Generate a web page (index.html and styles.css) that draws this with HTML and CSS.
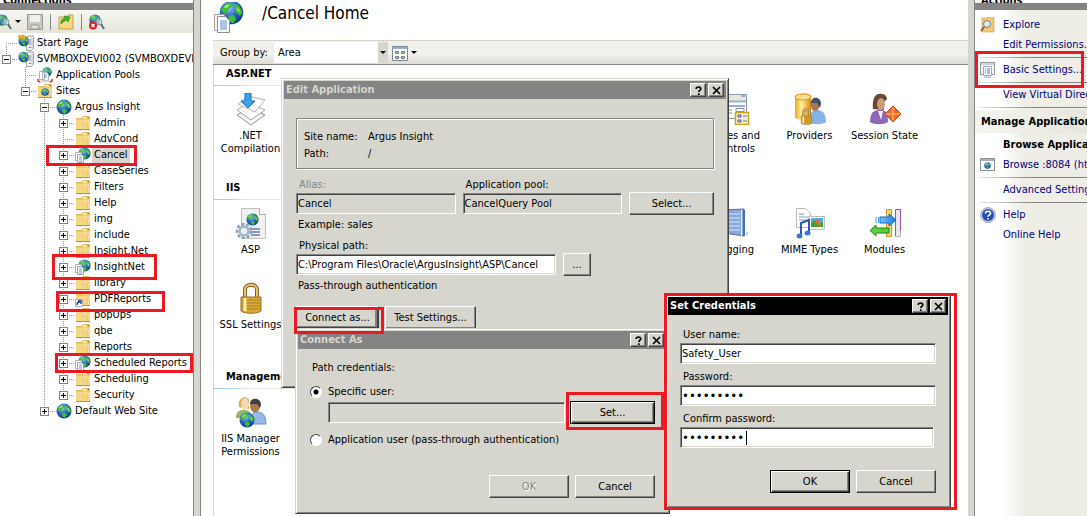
FILE: index.html
```html
<!DOCTYPE html>
<html lang="en">
<head>
    <meta charset="UTF-8">
    <meta name="viewport" content="width=device-width, initial-scale=1.0">
    <title>Internet Information Services (IIS) Manager</title>
    <link rel="stylesheet" href="styles.css">
</head>
<body>
    <!-- Shared icons -->
    <svg class="defs" width="0" height="0" aria-hidden="true">
        <defs>
            <radialGradient id="sea" cx="0.4" cy="0.3" r="0.7">
                <stop offset="0" stop-color="#9cc8f8"/>
                <stop offset="0.5" stop-color="#2c68cc"/>
                <stop offset="1" stop-color="#123c8c"/>
            </radialGradient>
            <linearGradient id="gold" x1="0" x2="1">
                <stop offset="0" stop-color="#e8a820"/>
                <stop offset="0.4" stop-color="#fff0a0"/>
                <stop offset="1" stop-color="#d08810"/>
            </linearGradient>
            <linearGradient id="bluearrow" x1="0" x2="1">
                <stop offset="0" stop-color="#70c8ff"/>
                <stop offset="1" stop-color="#1478e0"/>
            </linearGradient>
        </defs>
        <symbol id="globe" viewBox="0 0 16 16">
            <circle cx="8" cy="8" r="7.500" fill="url(#sea)"/>
            <path d="M2 5 5 2 8 1.500 8.500 4 6 6 5 9 3 8 1.500 7zM10 2 13 4 15 8 13.500 10 11 8 10 5zM6 10 9 9.500 11 12 9 15 6.500 13.500z" fill="#3fc030"/>
            <path d="M3 5 5 3 7 3 5 5zM11 5 13 6 13 8z" fill="#b8f090"/>
        </symbol>
        <symbol id="folder" viewBox="0 0 16 16">
            <path d="M1 3h6v-1l1-1h6l1 1v12.500H1z" fill="#e4bc5c"/>
            <path d="M1 4.500h14V14H1z" fill="#f4d888"/>
            <path d="M8 2h5v1.500H8z" fill="#fff4cc"/>
            <path d="M12 2h2v1h-2z" fill="#5090d0"/>
            <path d="M1 14h14v1H1z" fill="#b89040"/>
            <path d="M7 10h2M11 9h2M11 12h2" stroke="#e0b860"/>
        </symbol>
        <symbol id="app" viewBox="0 0 16 16">
            <use href="#globe" x="3" y="0" width="13" height="13"/>
            <path d="M.5 5.500h6v8h-6z" fill="#fff" stroke="#b0b0b0"/>
            <path d="M2.500 7.500h4l2 2v6h-6z" fill="#fff" stroke="#a0a0a0"/>
            <path d="M4 10h3M4 12h3M4 14h3" stroke="#4878b8" stroke-width="0.800"/>
        </symbol>
        <symbol id="server" viewBox="0 0 16 16">
            <path d="M8.500 2.500 10 1h5.500v12l-2 2.500h-5z" fill="#f0f0f0" stroke="#a0a8a8"/>
            <path d="M9 5h4M9 7h4M9 9h4" stroke="#808890"/>
            <path d="M14 3v10" stroke="#b8bcc0"/>
            <path d="M11 12h2v1h-2z" fill="#30c030"/>
            <use href="#globe" x="0" y="0" width="11" height="12"/>
        </symbol>
        <symbol id="start" viewBox="0 0 16 16">
            <use href="#server" width="16" height="16"/>
            <path d="M0 1 5 0 8 2 7 5 4 3 2 4z" fill="#f8b020" stroke="#c88008" stroke-width="0.500"/>
        </symbol>
        <symbol id="pools" viewBox="0 0 16 16">
            <use href="#globe" x="5" y="0" width="10" height="10"/>
            <path d="M2.500 4.500h5v8h-5zM5.500 5.500h4l2 2v6h-6z" fill="#fff" stroke="#b0b0b0"/>
            <path d="M7 8h3M7 10h3" stroke="#4878b8" stroke-width="0.800"/>
            <path d="M2 14.500h12" stroke="#d8dce0" stroke-width="2"/>
            <path d="M1 12v2l2 1M15 12v2l-2 1" fill="none" stroke="#d83828" stroke-width="1.500"/>
        </symbol>
        <symbol id="sites" viewBox="0 0 16 16">
            <use href="#folder" width="16" height="16"/>
            <use href="#globe" x="4" y="5" width="8" height="8"/>
        </symbol>
        <symbol id="link" viewBox="0 0 16 16">
            <use href="#folder" width="16" height="16"/>
            <path d="M.5 8.500h7v7h-7z" fill="#f8f8f8" stroke="#a8a8b8"/>
            <path d="M2 14c0-2 1-3 3-3.500M3 10h3v3" fill="none" stroke="#1c2c90" stroke-width="1.300"/>
        </symbol>
        <symbol id="lens" viewBox="0 0 16 16">
            <use href="#globe" x="0" y="0" width="12" height="12"/>
            <circle cx="10" cy="8" r="3" fill="#d0e4f4" fill-opacity="0.700" stroke="#8898a8"/>
            <path d="M12 10l3 5" stroke="#606870" stroke-width="2"/>
        </symbol>
        <symbol id="padlock" viewBox="0 0 32 32">
            <path d="M10 17V8c0-7 12-7 12 0v9" fill="none" stroke="#806020" stroke-width="4"/>
            <path d="M10 17V8c0-7 12-7 12 0v9" fill="none" stroke="#e8c870" stroke-width="2"/>
            <path d="M6 15h20v14c-4 3-16 3-20 0z" fill="#dca838" stroke="#946c18"/>
            <path d="M7 18h18M7 21h18M7 24h18M7 27h18" stroke="#a87c20"/>
            <path d="M10 16v13" stroke="#fff0a8" stroke-width="3"/>
        </symbol>
        <symbol id="pages32" viewBox="0 0 32 32">
            <use href="#globe" x="6" y="-2" width="25" height="25"/>
            <path d="M1.500 12.500h10v16h-10z" fill="#f4f4f4" stroke="#a0a0a0"/>
            <path d="M4.500 14.500h8l4 4v12h-12z" fill="#fff" stroke="#909090"/>
            <path d="M7 19h7M7 21h7M7 23h7M7 25h7M7 27h7" stroke="#5888c8"/>
        </symbol>
        <symbol id="compile" viewBox="0 0 32 32">
            <path d="M2 22l12-7 16 7-14 10z" fill="#f4f4f4" stroke="#909890"/>
            <path d="M2 17l12-7 16 7-14 10z" fill="#fff" stroke="#a0a8a0"/>
            <path d="M3 11l10-8 17 4-10 12z" fill="#fff" stroke="#b0b0b0"/>
            <path d="M10 0h6v8h4l-7 7-7-7h4z" fill="#38a4f0" stroke="#1870c0"/>
        </symbol>
        <symbol id="asp" viewBox="0 0 32 32">
            <path d="M6.500 1.500h18l6 6v24h-24z" fill="#f0f0f0" stroke="#c0c0c0"/>
            <path d="M24.500 1.500v6h6" fill="#fff" stroke="#b0b0b0"/>
            <use href="#globe" x="11" y="6" width="13" height="13"/>
            <path d="M16 22h9M16 25h9M16 28h9" stroke="#6878b0" stroke-width="1.500"/>
            <circle cx="9" cy="24" r="7" fill="none" stroke="#88a0b8" stroke-width="2.500" stroke-dasharray="3 2"/>
            <circle cx="9" cy="24" r="4.500" fill="#e8eef4" stroke="#a0b4c8" stroke-width="2.500"/>
        </symbol>
        <symbol id="people" viewBox="0 0 32 32">
            <path d="M1 22c0-8 5-8 8-8s8 1 8 8z" fill="#98b868"/>
            <path d="M4 11C2 0 14-1 14 5v8z" fill="#d8a850"/>
            <ellipse cx="10" cy="8" rx="4" ry="6" fill="#f4d8b8"/>
            <path d="M15 28c0-12 5-12 8-12s8 2 8 12z" fill="#98b8e8" stroke="#6890c8"/>
            <ellipse cx="20" cy="10" rx="5" ry="6.500" fill="#a87850"/>
            <path d="M15 8c0-7 11-7 11 1l-1 3-3-4z" fill="#404040"/>
            <use href="#globe" x="4" y="16" width="16" height="16"/>
        </symbol>
        <symbol id="controls" viewBox="0 0 32 32">
            <path d="M2.500 1.500h25v24h-25z" fill="#fff" stroke="#8898a8"/>
            <path d="M3 2h24v6H3z" fill="#e8e8e0"/>
            <path d="M3 8.500h24" stroke="#98b0c8" stroke-width="2"/>
            <path d="M6 13h20" stroke="#3850e0"/>
            <path d="M22 3h4" stroke="#5078c0"/>
            <path d="M7 17h6M7 20h6M17 15.500h8v3h-8z" fill="none" stroke="#889098"/>
            <path d="M16.500 19.500h13v12h-13z" fill="#f4f0d8" stroke="#c8a810" stroke-width="1.500"/>
            <path d="M19 22h3v2h-3zM19 27h3v2h-3z" fill="#fff" stroke="#604878"/>
            <path d="M24 23h4M24 28h4" stroke="#4080d0"/>
        </symbol>
        <symbol id="providers" viewBox="0 0 32 32">
            <path d="M1 4c0-5 16-5 16 0v20c0 4-16 4-16 0z" fill="url(#gold)"/>
            <ellipse cx="9" cy="4" rx="8" ry="3" fill="#fce090" stroke="#d89818"/>
            <path d="M15 29c0-10 4-12 8-12s9 2 9 12c-4 3-13 3-17 0z" fill="#88b4e4"/>
            <ellipse cx="21" cy="12" rx="4.500" ry="6" fill="#a87850"/>
            <path d="M17 10c0-7 10-7 10 1l-1 4-3-5z" fill="#405060"/>
            <use href="#padlock" x="4" y="15" width="17" height="17"/>
        </symbol>
        <symbol id="session" viewBox="0 0 32 32">
            <path d="M1 29c0-10 4-12 10-12s8 2 8 12c-4 3-14 3-18 0z" fill="#9068b8"/>
            <path d="M9 18l3 9 2-9z" fill="#f4f0f8"/>
            <path d="M4 16C3 4 7 0 13 1c3 0 5 3 5 5l-3 3v8z" fill="#684830"/>
            <ellipse cx="12" cy="11" rx="4" ry="6" fill="#c8a078"/>
            <path d="M16 21l8-8 8 8-8 8z" fill="#f06820" stroke="#c84010"/>
            <path d="M24 14v14M17 21h14" stroke="#ffc890"/>
        </symbol>
        <symbol id="logging" viewBox="0 0 32 32">
            <path d="M5 3 25 2v27l-20-3z" fill="#88a8d8" stroke="#5070a8"/>
            <path d="M7 7h14M7 11h14M7 15h14M7 19h14M7 23h14" stroke="#b0c8ec" stroke-width="2"/>
            <path d="M22.500 3v26" stroke="#e8f0fc"/>
            <path d="M25 3v26" stroke="#4870b0" stroke-width="2"/>
            <path d="M27 24l3 2-3 4z" fill="#d8d8d8"/>
        </symbol>
        <symbol id="mime" viewBox="0 0 32 32">
            <path d="M2.500 1.500h9l5 5v14h-14z" fill="#fff" stroke="#b8b8b8"/>
            <path d="M5 7h5M5 10h9M5 13h8" stroke="#7898c0"/>
            <path d="M14.500 9.500h16v13h-16z" fill="#fff" stroke="#b8c0c8"/>
            <path d="M17 11h12v9H17z" fill="#58a8e8"/>
            <path d="M17 20v-4l4-3 4 4 4-2v5z" fill="#40a030"/>
            <path d="M21 14l3-2 3 5-2 3z" fill="#e07030"/>
            <path d="M7 29V16l8-3v13" fill="none" stroke="#2858b8" stroke-width="2"/>
            <ellipse cx="5.500" cy="29" rx="3" ry="2.500" fill="#3878d8"/>
            <ellipse cx="13.500" cy="26" rx="3" ry="2.500" fill="#3878d8"/>
        </symbol>
        <symbol id="modules" viewBox="0 0 32 32">
            <path d="M17.500 2.500h5v27h-5z" fill="#f4d470" stroke="#c89820"/>
            <path d="M26.500 2.500h5v27h-5z" fill="#e8e8ec" stroke="#b8b8b8"/>
            <path d="M26.500 29V2.500h5V24" fill="none" stroke="#9858a8"/>
            <path d="M11 10h9V7l7 6-7 6v-3h-9z" fill="url(#bluearrow)" stroke="#1868c0"/>
            <path d="M7 10v6M9.500 10v6" stroke="#40a0e8"/>
            <path d="M20 21H7v-3l-6 5.500L7 29v-3h13z" fill="#58d038" stroke="#208818"/>
        </symbol>
        <symbol id="explore" viewBox="0 0 16 16">
            <path d="M2 1h5l1-1h5l1 1v14H2z" fill="#f0cc70" stroke="#c89c40" stroke-width="0.600"/>
            <circle cx="7" cy="7" r="3.500" fill="#d8ecf8" stroke="#707880"/>
            <path d="M4 10l-3 4" stroke="#806040" stroke-width="2"/>
        </symbol>
        <symbol id="settings" viewBox="0 0 16 16">
            <path d="M.5.5h14v12H.5z" fill="#f4f4f4" stroke="#909898"/>
            <path d="M1 2h13" stroke="#b0b8c0"/>
            <path d="M3.500 4.500h8v9h-8z" fill="#fff" stroke="#a0a8b0"/>
            <path d="M5 7h1M7 7h3M5 9h1M7 9h3M5 11h1M7 11h3" stroke="#5078a8"/>
            <path d="M4 15h7" stroke="#70a8d8"/>
        </symbol>
        <symbol id="browse" viewBox="0 0 16 16">
            <path d="M.5 1.500h14v12H.5z" fill="#fff" stroke="#889098"/>
            <path d="M1 3h13" stroke="#a8b0b8" stroke-width="2"/>
            <use href="#globe" x="4" y="5" width="7" height="7"/>
        </symbol>
        <symbol id="help" viewBox="0 0 16 16">
            <circle cx="8" cy="8" r="7.500" fill="#c8d0e0" stroke="#8890a0" stroke-width="0.700"/>
            <circle cx="8" cy="8" r="6" fill="#2450b8"/>
            <path d="M5.500 6.500c0-3 5-3 5 0 0 1.500-2.500 1.500-2.500 3.200M8 11v1.600" fill="none" stroke="#fff" stroke-width="1.600"/>
        </symbol>
        <symbol id="question" viewBox="0 0 9 9">
            <path d="M2.200 3C2.200.4 6.800.4 6.800 2.800 6.800 4 4.800 4.200 4.800 6M4.800 7.200V9" fill="none" stroke="#000" stroke-width="1.700"/>
        </symbol>
        <symbol id="close" viewBox="0 0 9 9">
            <path d="M1 1l7 7M8 1 1 8" stroke="#000" stroke-width="1.700"/>
        </symbol>
    </svg>

    <div class="manager">
        <aside class="connections">
            <div class="pane-title"><span>Connections</span></div>
            <div class="pane-bar"></div>
            <div class="toolbar">
                <svg class="icon"><use href="#lens"/></svg>
                <span class="arrow"></span>
                <svg class="icon disk" viewBox="0 0 16 16"><path d="M.5.5h15v15H.5z" fill="#c8c8c4" stroke="#989894"/><path d="M3 1h10v7H3z" fill="#f0f0ec"/><path d="M4 11h8v4H4z" fill="#e0e0dc" stroke="#989894"/></svg>
                <span class="divider"></span>
                <svg class="icon" viewBox="0 0 16 16"><path d="M1 3h8l1-2h5v14H1z" fill="#f4d888" stroke="#c0942c" stroke-width="0.800"/><path d="M3 10c0-4 1-5 4-6L6 2l6 1-2 5-1-2c-3 1-4 2-6 4z" fill="#40b828" stroke="#207810" stroke-width="0.600"/></svg>
                <span class="divider"></span>
                <svg class="icon" viewBox="0 0 16 16"><use href="#lens"/><circle cx="4" cy="11.500" r="4" fill="#d82020"/><path d="M2.500 10l3 3M5.500 10l-3 3" stroke="#fff" stroke-width="1.300"/></svg>
            </div>
            <ul class="tree">
                <li><div class="node"><span class="slot"></span><svg class="icon"><use href="#start"/></svg><span>Start Page</span></div></li>
                <li>
                    <div class="node"><span class="slot"><i class="minus"></i></span><svg class="icon"><use href="#server"/></svg><span>SVMBOXDEVI002 (SVMBOXDEVI002\Administrator)</span></div>
                    <ul>
                        <li><div class="node"><span class="slot"></span><svg class="icon"><use href="#pools"/></svg><span>Application Pools</span></div></li>
                        <li>
                            <div class="node"><span class="slot"><i class="minus"></i></span><svg class="icon"><use href="#sites"/></svg><span>Sites</span></div>
                            <ul>
                                <li>
                                    <div class="node"><span class="slot"><i class="minus"></i></span><svg class="icon"><use href="#globe"/></svg><span>Argus Insight</span></div>
                                    <ul>
                                        <li><div class="node"><span class="slot"><i class="plus"></i></span><svg class="icon"><use href="#folder"/></svg><span>Admin</span></div></li>
                                        <li><div class="node"><span class="slot"></span><svg class="icon"><use href="#folder"/></svg><span>AdvCond</span></div></li>
                                        <li><div class="node marked mark-cancel"><span class="slot"><i class="plus"></i></span><svg class="icon"><use href="#app"/></svg><span class="selected">Cancel</span></div></li>
                                        <li><div class="node"><span class="slot"><i class="plus"></i></span><svg class="icon"><use href="#folder"/></svg><span>CaseSeries</span></div></li>
                                        <li><div class="node"><span class="slot"><i class="plus"></i></span><svg class="icon"><use href="#folder"/></svg><span>Filters</span></div></li>
                                        <li><div class="node"><span class="slot"><i class="plus"></i></span><svg class="icon"><use href="#folder"/></svg><span>Help</span></div></li>
                                        <li><div class="node"><span class="slot"><i class="plus"></i></span><svg class="icon"><use href="#folder"/></svg><span>img</span></div></li>
                                        <li><div class="node"><span class="slot"><i class="plus"></i></span><svg class="icon"><use href="#folder"/></svg><span>include</span></div></li>
                                        <li><div class="node"><span class="slot"><i class="plus"></i></span><svg class="icon"><use href="#folder"/></svg><span>Insight.Net</span></div></li>
                                        <li><div class="node marked mark-insight"><span class="slot"><i class="plus"></i></span><svg class="icon"><use href="#app"/></svg><span>InsightNet</span></div></li>
                                        <li><div class="node"><span class="slot"><i class="plus"></i></span><svg class="icon"><use href="#folder"/></svg><span>library</span></div></li>
                                        <li><div class="node marked mark-pdf"><span class="slot"><i class="plus"></i></span><svg class="icon"><use href="#link"/></svg><span>PDFReports</span></div></li>
                                        <li><div class="node"><span class="slot"><i class="plus"></i></span><svg class="icon"><use href="#folder"/></svg><span>popUps</span></div></li>
                                        <li><div class="node"><span class="slot"><i class="plus"></i></span><svg class="icon"><use href="#folder"/></svg><span>qbe</span></div></li>
                                        <li><div class="node"><span class="slot"><i class="plus"></i></span><svg class="icon"><use href="#folder"/></svg><span>Reports</span></div></li>
                                        <li><div class="node marked mark-scheduled"><span class="slot"><i class="plus"></i></span><svg class="icon"><use href="#app"/></svg><span>Scheduled Reports</span></div></li>
                                        <li><div class="node"><span class="slot"><i class="plus"></i></span><svg class="icon"><use href="#folder"/></svg><span>Scheduling</span></div></li>
                                        <li><div class="node"><span class="slot"><i class="plus"></i></span><svg class="icon"><use href="#folder"/></svg><span>Security</span></div></li>
                                    </ul>
                                </li>
                                <li><div class="node"><span class="slot"><i class="plus"></i></span><svg class="icon"><use href="#globe"/></svg><span>Default Web Site</span></div></li>
                            </ul>
                        </li>
                    </ul>
                </li>
            </ul>
        </aside>
        <div class="splitter"></div>

        <main class="home">
            <header class="home-title">
                <svg class="icon32"><use href="#pages32"/></svg>
                <h1>/Cancel Home</h1>
            </header>
            <div class="groupbar">
                <label for="groupBy">Group by:</label>
                <div class="combo">
                    <select id="groupBy"><option>Area</option></select>
                    <span class="combo-arrow"><span class="arrow"></span></span>
                </div>
                <svg class="icon" viewBox="0 0 16 16"><path d="M.5 1.500h15v14H.5z" fill="#fff" stroke="#788898"/><path d="M1 3h14" stroke="#98b0c8" stroke-width="2"/><path d="M3.500 6.500h3v2h-3zM9.500 6.500h3v2h-3zM3.500 11.500h3v2h-3zM9.500 11.500h3v2h-3z" fill="#b8c890" stroke="#707880"/></svg>
                <span class="arrow"></span>
            </div>
            <div class="features">
                <section>
                    <h2>ASP.NET</h2>
                    <div class="row">
                        <div class="column">
                            <div class="feature"><svg class="icon32"><use href="#compile"/></svg><span>.NET Compilation</span></div>
                        </div>
                        <div class="column wide">
                            <div class="feature"><svg class="icon32"><use href="#controls"/></svg><span>Pages and Controls</span></div>
                            <div class="feature"><svg class="icon32"><use href="#providers"/></svg><span>Providers</span></div>
                            <div class="feature"><svg class="icon32"><use href="#session"/></svg><span>Session State</span></div>
                        </div>
                    </div>
                </section>
                <section>
                    <h2>IIS</h2>
                    <div class="row">
                        <div class="column">
                            <div class="feature"><svg class="icon32"><use href="#asp"/></svg><span>ASP</span></div>
                            <div class="feature"><svg class="icon32"><use href="#padlock"/></svg><span>SSL Settings</span></div>
                        </div>
                        <div class="column wide">
                            <div class="feature"><svg class="icon32"><use href="#logging"/></svg><span>Logging</span></div>
                            <div class="feature"><svg class="icon32"><use href="#mime"/></svg><span>MIME Types</span></div>
                            <div class="feature"><svg class="icon32"><use href="#modules"/></svg><span>Modules</span></div>
                        </div>
                    </div>
                </section>
                <section>
                    <h2>Management</h2>
                    <div class="row">
                        <div class="column">
                            <div class="feature"><svg class="icon32"><use href="#people"/></svg><span>IIS Manager Permissions</span></div>
                        </div>
                    </div>
                </section>
            </div>
        </main>

        <aside class="actions">
            <div class="pane-title"><span>Actions</span></div>
            <div class="pane-bar"></div>
            <nav>
                <a href="#"><svg class="icon"><use href="#explore"/></svg>Explore</a>
                <a href="#">Edit Permissions...</a>
                <hr>
                <a href="#" class="marked mark-basic"><svg class="icon"><use href="#settings"/></svg>Basic Settings...</a>
                <hr>
                <a href="#">View Virtual Directories</a>
                <hr>
                <h3>Manage Application</h3>
                <h4>Browse Application</h4>
                <a href="#"><svg class="icon"><use href="#browse"/></svg>Browse :8084 (http)</a>
                <hr>
                <a href="#">Advanced Settings...</a>
                <hr>
                <a href="#"><svg class="icon"><use href="#help"/></svg>Help</a>
                <a href="#">Online Help</a>
            </nav>
        </aside>
    </div>

    <!-- Edit Application -->
    <div class="dialog edit-app" role="dialog" aria-labelledby="editTitle">
        <div class="titlebar">
            <span id="editTitle">Edit Application</span>
            <button class="caption" aria-label="Help"><svg><use href="#question"/></svg></button>
            <button class="caption" aria-label="Close"><svg><use href="#close"/></svg></button>
        </div>
        <div class="dialog-body">
            <dl class="site">
                <dt>Site name:</dt><dd>Argus Insight</dd>
                <dt>Path:</dt><dd>/</dd>
            </dl>
            <div class="fields">
                <div class="field">
                    <label class="dim" for="alias">Alias:</label>
                    <input type="text" id="alias" class="readonly" value="Cancel" readonly>
                </div>
                <div class="field">
                    <label for="pool">Application pool:</label>
                    <input type="text" id="pool" class="readonly" value="CancelQuery Pool" readonly>
                </div>
                <button class="push">Select...</button>
            </div>
            <p class="note">Example: sales</p>
            <div class="fields path">
                <div class="field">
                    <label for="path">Physical path:</label>
                    <input type="text" id="path" value="C:\Program Files\Oracle\ArgusInsight\ASP\Cancel">
                </div>
                <button class="push small">...</button>
            </div>
            <p class="note">Pass-through authentication</p>
            <div class="buttons">
                <button class="push pressed">Connect as...</button>
                <button class="push test">Test Settings...</button>
            </div>
        </div>
    </div>

    <!-- Connect As -->
    <div class="dialog connect" role="dialog" aria-labelledby="connectTitle">
        <div class="titlebar">
            <span id="connectTitle">Connect As</span>
            <button class="caption" aria-label="Help"><svg><use href="#question"/></svg></button>
            <button class="caption" aria-label="Close"><svg><use href="#close"/></svg></button>
        </div>
        <div class="dialog-body">
            <p>Path credentials:</p>
            <div class="option">
                <input type="radio" name="who" id="specific" checked>
                <label for="specific">Specific user:</label>
            </div>
            <div class="user-row">
                <input type="text" class="readonly" aria-label="Specific user" readonly>
                <button class="push default">Set...</button>
            </div>
            <div class="option">
                <input type="radio" name="who" id="appUser">
                <label for="appUser">Application user (pass-through authentication)</label>
            </div>
            <div class="buttons">
                <button class="push" disabled>OK</button>
                <button class="push">Cancel</button>
            </div>
        </div>
    </div>
    <div class="mark mark-connect"></div>
    <div class="mark mark-set"></div>

    <!-- Set Credentials -->
    <div class="credentials-frame">
        <div class="dialog credentials" role="dialog" aria-labelledby="credTitle">
            <div class="titlebar active">
                <span id="credTitle">Set Credentials</span>
                <button class="caption" aria-label="Help"><svg><use href="#question"/></svg></button>
                <button class="caption" aria-label="Close"><svg><use href="#close"/></svg></button>
            </div>
            <div class="dialog-body">
                <div class="field">
                    <label for="userName">User name:</label>
                    <input type="text" id="userName" value="Safety_User">
                </div>
                <div class="field">
                    <label for="password">Password:</label>
                    <input type="password" id="password" value="safety123">
                </div>
                <div class="field confirm">
                    <label for="confirm">Confirm password:</label>
                    <input type="password" id="confirm" value="safety123">
                    <span class="caret"></span>
                </div>
                <div class="buttons">
                    <button class="push default">OK</button>
                    <button class="push">Cancel</button>
                </div>
            </div>
        </div>
    </div>
</body>
</html>
```

FILE: styles.css
```css
*, *::after {
    box-sizing: border-box;
}
body {
    margin: 0;
    height: 100vh;
    overflow: hidden;
    position: relative;
    background: #fff;
    color: #000;
    font-family: Tahoma, "DejaVu Sans Condensed", "DejaVu Sans", sans-serif;
    font-size: 11px;
    line-height: 16px;
}
input, select, button {
    font: inherit;
    color: inherit;
    margin: 0;
}
h1, h2, h3, h4, p, ul, dl, dd {
    margin: 0;
    padding: 0;
}
.defs {
    position: absolute;
}
.manager {
    display: flex;
    height: 100%;
}
.icon {
    width: 16px;
    height: 16px;
    flex: none;
}
.icon32 {
    width: 32px;
    height: 32px;
    flex: none;
}
.arrow {
    flex: none;
    border: 3px solid transparent;
    border-top-color: #000;
    border-bottom: 0;
}
.pane-title {
    display: flex;
    align-items: flex-end;
    height: 3px;
    overflow: hidden;
    padding-left: 3px;
    font-weight: bold;
    line-height: 4px;
}
.pane-bar {
    height: 7px;
    background: #848484;
}

/* Connections pane */
.connections {
    flex: none;
    width: 193px;
    overflow: hidden;
}
.toolbar {
    display: flex;
    align-items: center;
    height: 23px;
    gap: 6px;
    margin-left: -4px;
    background: linear-gradient(#f7f7f2, #e6e5dc);
}
.toolbar .arrow {
    margin-left: -3px;
}
.divider {
    width: 1px;
    height: 16px;
    background: #848484;
    margin: 0 1px;
}
.tree {
    padding-top: 2px;
}
.tree ul {
    margin-left: 19px;
}
.tree li {
    list-style: none;
    background: repeating-linear-gradient(#949494 0 1px, transparent 1px 2px) 6px 0 / 1px 100% no-repeat;
}
.tree li:last-child {
    background-size: 1px 8px;
}
.tree > li:first-child {
    background-position: 6px 8px;
}
.node {
    display: flex;
    align-items: center;
    height: 16px;
    white-space: nowrap;
    position: relative;
}
.slot {
    display: flex;
    align-items: center;
    flex: none;
    width: 18px;
    height: 16px;
    padding-left: 2px;
    background: repeating-linear-gradient(90deg, #949494 0 1px, transparent 1px 2px) 8px 8px / 10px 1px no-repeat;
}
.node > span:last-child {
    margin-left: 1px;
    padding: 0 2px;
}
.node > .selected {
    background: #d6d6ce;
}
.plus, .minus {
    width: 9px;
    height: 9px;
    border: 1px solid #848484;
    background: linear-gradient(#000, #000) center / 5px 1px no-repeat, #fff;
}
.plus {
    background: linear-gradient(#000, #000) center / 5px 1px no-repeat, linear-gradient(#000, #000) center / 1px 5px no-repeat, #fff;
}
.splitter {
    flex: none;
    width: 8px;
    background: #d6d6ce;
    border: solid #848484;
    border-width: 0 1px;
}

/* Red call-outs */
.marked::after, .mark {
    content: "";
    position: absolute;
    z-index: 2;
    border: 3px solid #ed1822;
    pointer-events: none;
}
.mark-cancel::after {
    left: -11px;
    top: -2px;
    width: 91px;
    height: 21px;
}
.mark-insight::after {
    left: -5px;
    top: -5px;
    width: 105px;
    height: 26px;
}
.mark-pdf::after {
    left: -1px;
    top: 0;
    width: 109px;
    height: 21px;
}
.mark-scheduled::after {
    left: -2px;
    top: -2px;
    width: 138px;
    height: 20px;
}
.mark-basic::after {
    left: 0;
    top: -9px;
    width: 109px;
    height: 37px;
}
.mark-connect {
    left: 294px;
    top: 307px;
    width: 90px;
    height: 27px;
}
.mark-set {
    left: 566px;
    top: 392px;
    width: 98px;
    height: 38px;
}

/* Home page */
.home {
    flex: 1;
    min-width: 0;
    margin-left: 12px;
    display: flex;
    flex-direction: column;
}
.home-title {
    display: flex;
    flex: none;
    height: 40px;
    padding-top: 2px;
    gap: 17px;
}
h1 {
    font-size: 17px;
    line-height: 22px;
    font-weight: normal;
}
.groupbar {
    display: flex;
    flex: none;
    align-items: center;
    height: 25px;
    padding-left: 7px;
    border-top: 1px dotted #c6c6be;
    border-bottom: 1px solid #848484;
    background: linear-gradient(#f1f0ea 60%, #dddcd3);
}
.groupbar label {
    width: 54px;
}
.groupbar .icon {
    margin: 0 3px 0 4px;
}
.combo {
    display: flex;
    width: 114px;
    height: 21px;
    background: #fff;
}
.combo select {
    flex: 1;
    appearance: none;
    border: 0;
    padding: 0 4px;
    background: #fff;
}
.combo-arrow {
    display: flex;
    align-items: center;
    justify-content: center;
    width: 10px;
    background: #d6d6ce;
}
.features {
    flex: 1;
    border-left: 1px solid #d6d6ce;
    padding-top: 1px;
}
h2 {
    width: 82px;
    height: 20px;
    padding-left: 12px;
    font-size: 11px;
    line-height: 16px;
    border-bottom: 1px solid;
    border-image: linear-gradient(90deg, #9cceef 20%, #e7e7de 40%) 1;
}
.row {
    display: flex;
    justify-content: space-between;
    padding: 7px 0 12px;
}
.column {
    width: 73px;
}
.wide {
    display: flex;
    width: auto;
    padding-right: 46px;
}
.feature {
    display: flex;
    flex-direction: column;
    align-items: center;
    gap: 4px;
    width: 75px;
    height: 75px;
    text-align: center;
    line-height: 13px;
}
.column:not(.wide) .feature {
    width: 73px;
}

/* Actions pane */
.actions {
    flex: none;
    width: 119px;
    overflow: hidden;
    border-left: 6px solid #d6d6ce;
    box-shadow: inset 1px 0 #848484;
    padding-left: 1px;
    background: #efeee6;
    display: flex;
    flex-direction: column;
}
.actions .pane-title {
    flex: none;
    padding-left: 6px;
    background: #fff;
}
.actions .pane-bar {
    flex: none;
    height: 7px;
}
.actions nav {
    flex: 1;
    padding-top: 5px;
    background: linear-gradient(90deg, #fff 28px, #efeee6 48px);
}
.actions a, h4 {
    display: flex;
    align-items: center;
    position: relative;
    height: 20px;
    padding-left: 28px;
    white-space: nowrap;
    text-decoration: none;
    color: #00007b;
}
.actions a .icon {
    margin: 0 7px 0 -23px;
}
.actions hr {
    height: 1px;
    margin: 2px 0 2px 4px;
    border: 0;
    background: linear-gradient(90deg, #e7e7de, #848484 50%);
}
h3, h4 {
    font-size: 11px;
    color: #000;
    white-space: nowrap;
}
h3 {
    height: 23px;
    margin-bottom: 2px;
    padding-left: 6px;
    line-height: 23px;
    background: linear-gradient(90deg, #f5f5ef, #e7e6dd);
}
.actions h4 {
    color: #000;
}

/* Dialogs */
.dialog {
    position: absolute;
    padding: 2px;
    background: #d6d6ce;
    border: 1px solid;
    border-color: #d6d6ce #424242 #424242 #d6d6ce;
    box-shadow: inset 1px 1px #fff, inset -1px -1px #848484;
}
.titlebar {
    display: flex;
    align-items: center;
    height: 18px;
    padding: 0 2px;
    gap: 2px;
    background: #848484;
    color: #d6d6ce;
    font-weight: bold;
}
.titlebar span {
    flex: 1;
}
.titlebar.active {
    background: #000;
    color: #fff;
}
.caption {
    display: flex;
    align-items: center;
    justify-content: center;
    width: 16px;
    height: 14px;
    padding: 0;
    border: 1px solid;
    border-color: #fff #424242 #424242 #fff;
    box-shadow: inset -1px -1px #848484;
    background: #d6d6ce;
}
.caption svg {
    width: 9px;
    height: 9px;
}
.push {
    width: 80px;
    height: 23px;
    padding: 0;
    border: 1px solid;
    border-color: #fff #424242 #424242 #fff;
    box-shadow: inset -1px -1px #848484;
    background: #d6d6ce;
}
.push:disabled {
    color: #848484;
    text-shadow: 1px 1px #fff;
}
.push.default {
    border-color: #000;
    box-shadow: inset 1px 1px #fff, inset -1px -1px #424242, inset -2px -2px #848484;
}
.field {
    display: flex;
    flex-direction: column;
    position: relative;
}
.field label {
    padding-left: 3px;
}
.dim {
    color: #848484;
}
input[type="text"], input[type="password"] {
    width: 100%;
    height: 21px;
    padding: 0 1px;
    border: 1px solid;
    border-color: #848484 #fff #fff #848484;
    box-shadow: inset 1px 1px #424242, inset -1px -1px #d6d6ce;
    background: #fff;
    outline: 0;
}
input[type="password"] {
    font-size: 13px;
}
input.readonly {
    background: #d6d6ce;
}
.buttons {
    display: flex;
    gap: 6px;
}

.edit-app {
    left: 281px;
    top: 78px;
    width: 448px;
    height: 310px;
}
.edit-app .dialog-body {
    padding: 19px 12px 0;
}
.site {
    display: grid;
    grid-template-columns: 64px 1fr;
    height: 51px;
    padding: 9px 7px;
    line-height: 17px;
    border: 1px solid #848484;
    box-shadow: inset 1px 1px #fff, 1px 1px #fff;
}
.fields {
    display: flex;
    align-items: flex-end;
    gap: 7px;
    margin-top: 8px;
}
.fields .field {
    width: 160px;
}
.fields .push {
    width: 85px;
    margin-bottom: -1px;
}
.fields.path {
    margin-top: 5px;
}
.path .field {
    width: 260px;
}
.fields .push.small {
    width: 28px;
}
.note {
    padding-left: 2px;
    margin-top: 3px;
}
.edit-app .buttons {
    margin-top: 12px;
}
.edit-app .push.pressed {
    width: 83px;
    box-shadow: inset -1px -1px #424242, inset -3px -2px #848484;
}
.edit-app .push.test {
    width: 91px;
}

.connect {
    left: 295px;
    top: 328px;
    width: 375px;
    height: 186px;
}
.connect .titlebar {
    margin-right: 1px;
}
.connect .dialog-body {
    padding: 11px 12px;
}
.connect p {
    padding-left: 2px;
}
.option {
    display: flex;
    align-items: center;
    height: 16px;
    gap: 6px;
}
.connect p + .option {
    margin-top: 8px;
}
.option input {
    appearance: none;
    width: 12px;
    height: 12px;
    border-radius: 50%;
    border: 1px solid;
    border-color: #424242 #fff #fff #424242;
    background: #fff;
}
.option input:checked {
    background: radial-gradient(#000 2px, #fff 3px);
}
.user-row {
    display: flex;
    align-items: center;
    gap: 5px;
    margin: 1px 0 8px 18px;
}
.user-row input[type="text"] {
    width: 237px;
}
.user-row .push {
    width: 85px;
}
.connect .buttons {
    justify-content: flex-end;
    margin-top: 27px;
}

.credentials-frame {
    position: absolute;
    left: 664px;
    top: 293px;
    width: 293px;
    height: 217px;
    border: 3px solid #ed1822;
    background: #fff;
}
.credentials {
    inset: 0 3px 0 0;
    border-width: 0 1px 0 0;
    padding: 1px 2px 0 1px;
}
.credentials .dialog-body {
    padding: 12px 12px;
}
.credentials .field {
    margin-bottom: 5px;
}
.credentials .confirm {
    margin-right: 2px;
}
.caret {
    position: absolute;
    left: 66px;
    bottom: 3px;
    width: 1px;
    height: 14px;
    background: #000;
}
.credentials .buttons {
    justify-content: flex-end;
    margin-top: 22px;
}
```
